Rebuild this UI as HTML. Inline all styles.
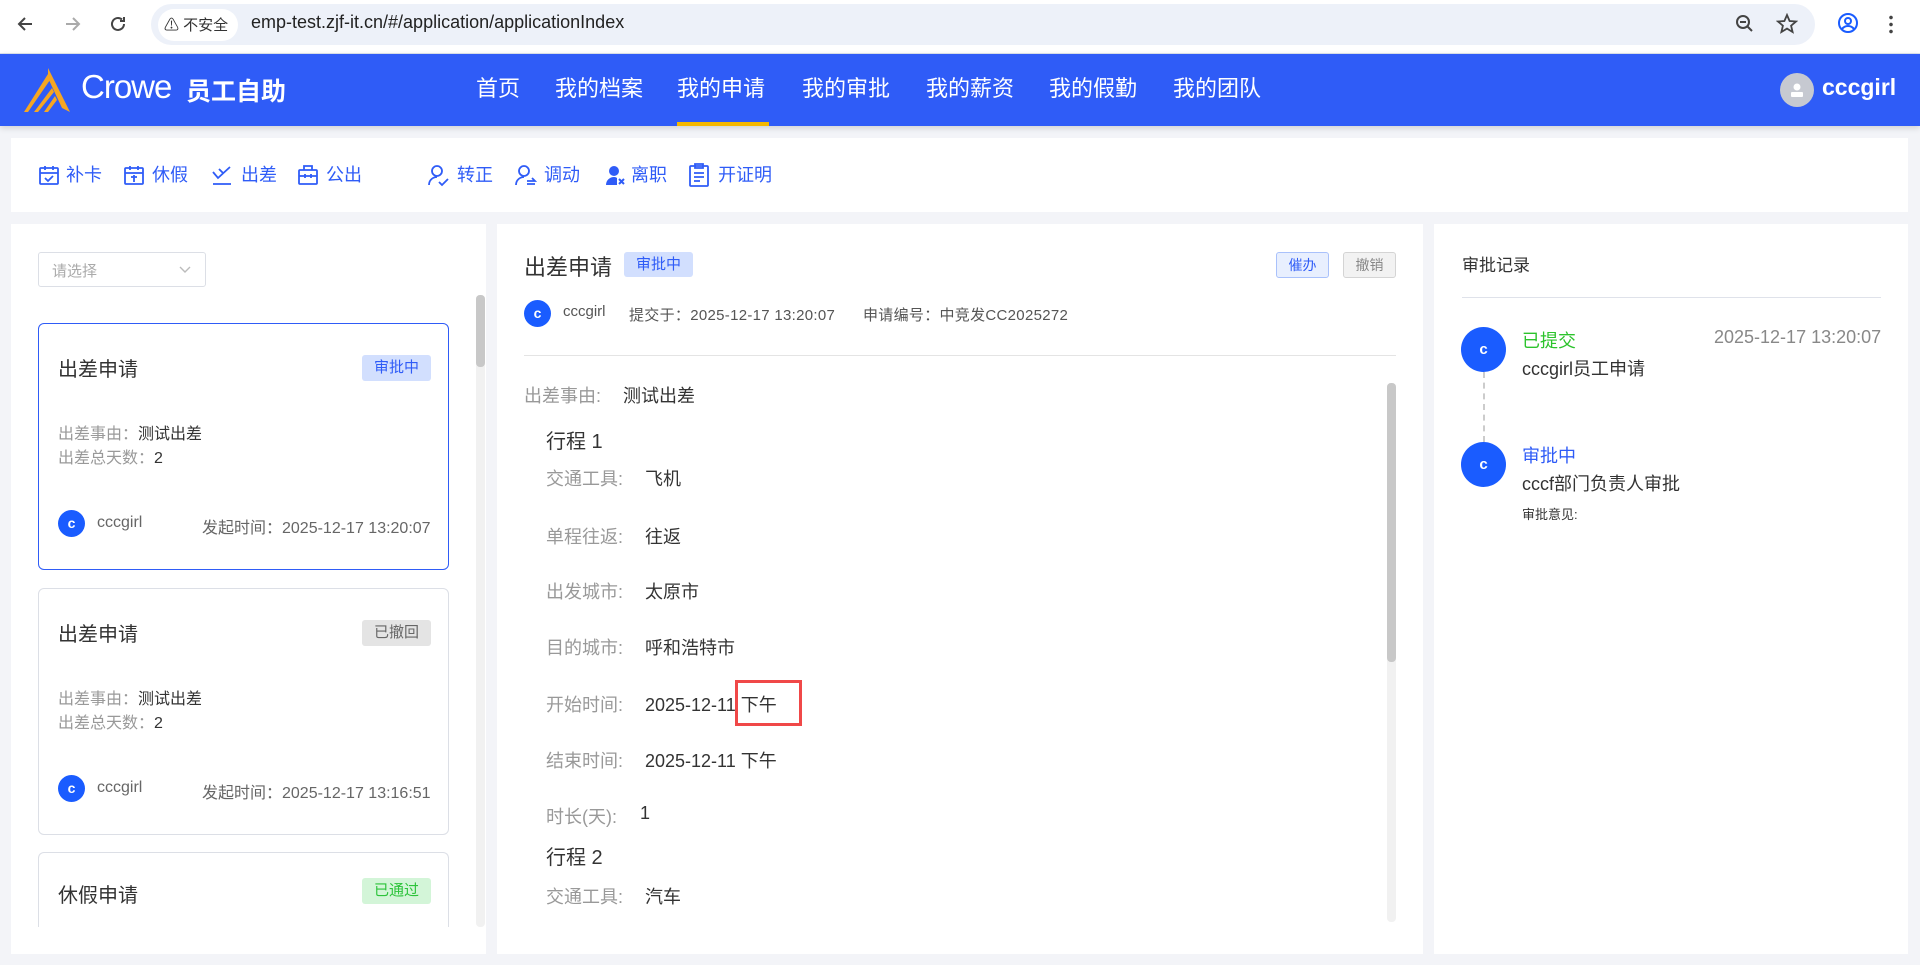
<!DOCTYPE html>
<html><head><meta charset="utf-8"><style>
*{margin:0;padding:0;box-sizing:border-box}
body{width:1920px;height:965px;overflow:hidden;background:#f3f4f8;font-family:"Liberation Sans","Noto Sans CJK SC",sans-serif;position:relative;color:#333}
.a{position:absolute;white-space:nowrap}
.chrome{left:0;top:0;width:1920px;height:54px;background:#fff;border-bottom:1px solid #dde3ee}
.pill{left:151px;top:4px;width:1664px;height:41px;border-radius:21px;background:#edf1f9}
.hdr{left:0;top:54px;width:1920px;height:72px;background:#2f5cf7;box-shadow:0 2px 6px rgba(0,0,0,.15)}
.nav{top:74px;font-size:22px;color:#fff;line-height:30px}
.card{background:#fff}
.tb{top:162px;font-size:18px;color:#2f5cf7;line-height:26px}
.av{border-radius:50%;background:#1a5cff;color:#fff;font-size:14px;text-align:center;font-weight:bold}
.row{font-size:18px;color:#333}
.lbl{color:#999}
.c{position:absolute;left:38px;width:411px;height:247px;border:1px solid #dcdfe6;border-radius:6px;background:#fff}
.c .t{position:absolute;left:19px;top:29px;font-size:20px;color:#333}
.c .bd{position:absolute;left:323px;top:31px;width:69px;height:26px;border-radius:3px;font-size:15px;text-align:center;line-height:26px}
.c .f{position:absolute;left:19px;font-size:16px;color:#333}
</style></head><body>
<div class="a chrome"></div>
<div class="a pill"></div>
<svg class="a" style="left:14px;top:13px" width="22" height="22" viewBox="0 0 22 22"><path d="M18 11H5M11 5l-6 6 6 6" stroke="#444" stroke-width="2" fill="none"/></svg>
<svg class="a" style="left:62px;top:13px" width="22" height="22" viewBox="0 0 22 22"><path d="M4 11h13M11 5l6 6-6 6" stroke="#aaa" stroke-width="2" fill="none"/></svg>
<svg class="a" style="left:107px;top:13px" width="22" height="22" viewBox="0 0 22 22"><path d="M17 11a6 6 0 1 1-2-4.5M17 4v4h-4" stroke="#444" stroke-width="2" fill="none"/></svg>
<div class="a" style="left:158px;top:9px;width:80px;height:32px;border-radius:16px;background:#fff"></div>
<div class="a" style="left:164px;top:14px;font-size:15px;color:#333">⚠ 不安全</div>
<div class="a" style="left:251px;top:12px;font-size:18px;color:#222">emp-test.zjf-it.cn/#/application/applicationIndex</div>
<svg class="a" style="left:1734px;top:13px" width="22" height="22" viewBox="0 0 22 22"><circle cx="9" cy="9" r="6" stroke="#444" stroke-width="2" fill="none"/><path d="M13 13l5 5M6 9h6" stroke="#444" stroke-width="2"/></svg>
<svg class="a" style="left:1776px;top:13px" width="22" height="22" viewBox="0 0 22 22"><path d="M11 2l2.6 6 6.4.5-4.9 4.2 1.5 6.3L11 15.6 5.4 19l1.5-6.3L2 8.5 8.4 8z" stroke="#444" stroke-width="1.8" fill="none"/></svg>
<svg class="a" style="left:1836px;top:11px" width="24" height="24" viewBox="0 0 24 24"><circle cx="12" cy="12" r="9" stroke="#1a5cff" stroke-width="2" fill="none"/><circle cx="12" cy="10" r="3" stroke="#1a5cff" stroke-width="2" fill="none"/><path d="M6 18c3-4 9-4 12 0" stroke="#1a5cff" stroke-width="2" fill="none"/></svg>
<div class="a" style="left:1889px;top:14px;width:4px;height:20px;background:radial-gradient(circle,#444 1.6px,transparent 2px) 0 0/4px 7px"></div>

<div class="a hdr"></div>
<svg class="a" style="left:22px;top:68px" width="50" height="46" viewBox="0 0 50 46"><path d="M26 0L48 44 40 40 26 10Z" fill="#f5a623"/><path d="M26 6L2 44 6 44 28 12Z" fill="#f5a623"/><path d="M30 20L12 44 16 44 32 24Z" fill="#f5a623"/><path d="M33 28L22 44 26 44 35 32Z" fill="#f5a623"/></svg>
<div class="a" style="left:81px;top:68px;font-size:33px;color:#fff;letter-spacing:-1px">Crowe</div>
<div class="a" style="left:186px;top:72px;font-size:25px;color:#fff;font-weight:bold">员工自助</div>
<div class="a nav" style="left:476px">首页</div>
<div class="a nav" style="left:555px">我的档案</div>
<div class="a nav" style="left:677px">我的申请</div>
<div class="a" style="left:677px;top:122px;width:92px;height:4px;background:#f5b800"></div>
<div class="a nav" style="left:802px">我的审批</div>
<div class="a nav" style="left:926px">我的薪资</div>
<div class="a nav" style="left:1049px">我的假勤</div>
<div class="a nav" style="left:1173px">我的团队</div>
<div class="a" style="left:1780px;top:73px;width:34px;height:34px;border-radius:50%;background:#c6c9d1"></div>
<svg class="a" style="left:1787px;top:80px" width="20" height="20" viewBox="0 0 20 20"><circle cx="10" cy="7" r="3.5" fill="#fff"/><rect x="4" y="12" width="12" height="5" rx="1" fill="#fff"/></svg>
<div class="a" style="left:1822px;top:74px;font-size:23px;color:#fff;font-weight:bold">cccgirl</div>

<div class="a card" style="left:11px;top:138px;width:1897px;height:74px"></div>
<svg class="a" style="left:38px;top:164px" width="22" height="22" viewBox="0 0 22 22" fill="none" stroke="#2f5cf7" stroke-width="1.8"><rect x="2" y="4" width="18" height="16" rx="1"/><path d="M2 9h18M7 2v4M15 2v4M7 14l3 3 5-5"/></svg>
<div class="a tb" style="left:66px">补卡</div>
<svg class="a" style="left:123px;top:164px" width="22" height="22" viewBox="0 0 22 22" fill="none" stroke="#2f5cf7" stroke-width="1.8"><rect x="2" y="4" width="18" height="16" rx="1"/><path d="M2 9h18M7 2v4M15 2v4M8 13h6M11 11v7"/></svg>
<div class="a tb" style="left:152px">休假</div>
<svg class="a" style="left:210px;top:164px" width="24" height="22" viewBox="0 0 24 22" fill="none" stroke="#2f5cf7" stroke-width="1.8"><path d="M3 8l5 6 12-11M9 5l4 4M3 20h18"/></svg>
<div class="a tb" style="left:241px">出差</div>
<svg class="a" style="left:297px;top:164px" width="22" height="22" viewBox="0 0 22 22" fill="none" stroke="#2f5cf7" stroke-width="1.8"><rect x="2" y="6" width="18" height="14" rx="1"/><path d="M7 6V2h8v4M2 12h18M8 10v4M14 10v4"/></svg>
<div class="a tb" style="left:326px">公出</div>
<svg class="a" style="left:426px;top:163px" width="24" height="24" viewBox="0 0 24 24" fill="none" stroke="#2f5cf7" stroke-width="1.8"><circle cx="11" cy="8" r="5"/><path d="M3 22c0-5 4-8 8-8M13 19l3 3 6-6"/></svg>
<div class="a tb" style="left:457px">转正</div>
<svg class="a" style="left:513px;top:163px" width="24" height="24" viewBox="0 0 24 24" fill="none" stroke="#2f5cf7" stroke-width="1.8"><circle cx="11" cy="8" r="5"/><path d="M3 22c0-5 4-8 8-8M14 18h8l-3-3M22 21h-8"/></svg>
<div class="a tb" style="left:544px">调动</div>
<svg class="a" style="left:603px;top:163px" width="24" height="24" viewBox="0 0 24 24" fill="#2f5cf7"><circle cx="11" cy="8" r="5"/><path d="M3 22c0-5 4-8 8-8 2 0 3 1 3 1v7z"/><path d="M16 16l5 5M21 16l-5 5" stroke="#2f5cf7" stroke-width="2"/></svg>
<div class="a tb" style="left:631px">离职</div>
<svg class="a" style="left:688px;top:163px" width="22" height="24" viewBox="0 0 22 24" fill="none" stroke="#2f5cf7" stroke-width="1.8"><rect x="2" y="3" width="18" height="20" rx="1"/><path d="M7 1h8v4H7zM6 10h10M6 14h10M6 18h6"/></svg>
<div class="a tb" style="left:718px">开证明</div>

<!-- left -->
<div class="a card" style="left:11px;top:224px;width:475px;height:730px"></div>
<div class="a" style="left:38px;top:252px;width:168px;height:35px;border:1px solid #dcdfe6;border-radius:3px"></div>
<div class="a" style="left:52px;top:260px;font-size:15px;color:#aaa">请选择</div>
<svg class="a" style="left:178px;top:262px" width="14" height="14" viewBox="0 0 14 14"><path d="M2 5l5 5 5-5" stroke="#bbb" stroke-width="1.4" fill="none"/></svg>
<div class="a" style="left:476px;top:295px;width:9px;height:632px;background:#f1f1f1;border-radius:4px"></div>
<div class="a" style="left:476px;top:295px;width:9px;height:72px;background:#c8c8c8;border-radius:4px"></div>

<div class="c" style="top:323px;border-color:#2f5cf7">
<div class="t">出差申请</div><div class="bd" style="background:#d2dffe;color:#2f5cf7">审批中</div>
<div class="f" style="top:96px"><span class="lbl">出差事由：</span>测试出差</div>
<div class="f" style="top:120px"><span class="lbl">出差总天数：</span>2</div>
<div class="a av" style="left:19px;top:186px;width:27px;height:27px;line-height:27px">c</div>
<div class="f" style="left:58px;top:190px;color:#666">cccgirl</div>
<div class="f" style="left:163px;top:190px;color:#666">发起时间：2025-12-17 13:20:07</div>
</div>
<div class="c" style="top:588px">
<div class="t">出差申请</div><div class="bd" style="background:#e4e4e4;color:#666">已撤回</div>
<div class="f" style="top:96px"><span class="lbl">出差事由：</span>测试出差</div>
<div class="f" style="top:120px"><span class="lbl">出差总天数：</span>2</div>
<div class="a av" style="left:19px;top:186px;width:27px;height:27px;line-height:27px">c</div>
<div class="f" style="left:58px;top:190px;color:#666">cccgirl</div>
<div class="f" style="left:163px;top:190px;color:#666">发起时间：2025-12-17 13:16:51</div>
</div>
<div class="c" style="top:852px;height:75px;border-bottom:none;border-radius:6px 6px 0 0">
<div class="t" style="top:26px">休假申请</div><div class="bd" style="top:25px;background:#d3f5d8;color:#2cc33a">已通过</div>
</div>
<div class="a" style="left:11px;top:927px;width:465px;height:27px;background:#fff"></div>

<!-- middle -->
<div class="a card" style="left:497px;top:224px;width:926px;height:730px"></div>
<div class="a" style="left:524px;top:250px;font-size:22px;color:#333">出差申请</div>
<div class="a" style="left:624px;top:252px;width:69px;height:25px;background:#d2dffe;border-radius:3px;color:#2f5cf7;font-size:15px;text-align:center;line-height:25px">审批中</div>
<div class="a" style="left:1276px;top:252px;width:53px;height:26px;background:#e8effe;border:1px solid #a9c1fb;border-radius:3px;color:#2f5cf7;font-size:14px;text-align:center;line-height:24px">催办</div>
<div class="a" style="left:1343px;top:252px;width:53px;height:26px;background:#f2f2f2;border:1px solid #d4d4d4;border-radius:3px;color:#888;font-size:14px;text-align:center;line-height:24px">撤销</div>
<div class="a av" style="left:524px;top:300px;width:27px;height:27px;line-height:27px">c</div>
<div class="a" style="left:563px;top:303px;font-size:15px;color:#555">cccgirl</div>
<div class="a" style="left:629px;top:304px;font-size:15px;color:#555;letter-spacing:.3px">提交于：2025-12-17 13:20:07</div>
<div class="a" style="left:863px;top:304px;font-size:15px;color:#555;letter-spacing:.3px">申请编号：中竞发CC2025272</div>
<div class="a" style="left:524px;top:355px;width:872px;height:1px;background:#e4e4e4"></div>
<div class="a" style="left:1387px;top:383px;width:9px;height:539px;background:#f1f1f1;border-radius:4px"></div>
<div class="a" style="left:1387px;top:383px;width:9px;height:279px;background:#c8c8c8;border-radius:4px"></div>
<div class="a row lbl" style="left:524px;top:382px">出差事由:</div><div class="a row" style="left:623px;top:382px">测试出差</div>
<div class="a" style="left:546px;top:425px;font-size:20px;color:#333">行程 1</div>
<div class="a row lbl" style="left:546px;top:465px">交通工具:</div><div class="a row" style="left:645px;top:465px">飞机</div>
<div class="a row lbl" style="left:546px;top:523px">单程往返:</div><div class="a row" style="left:645px;top:523px">往返</div>
<div class="a row lbl" style="left:546px;top:578px">出发城市:</div><div class="a row" style="left:645px;top:578px">太原市</div>
<div class="a row lbl" style="left:546px;top:634px">目的城市:</div><div class="a row" style="left:645px;top:634px">呼和浩特市</div>
<div class="a row lbl" style="left:546px;top:691px">开始时间:</div><div class="a row" style="left:645px;top:691px">2025-12-11 下午</div>
<div class="a" style="left:735px;top:680px;width:67px;height:46px;border:3px solid #f04848"></div>
<div class="a row lbl" style="left:546px;top:747px">结束时间:</div><div class="a row" style="left:645px;top:747px">2025-12-11 下午</div>
<div class="a row lbl" style="left:546px;top:803px">时长(天):</div><div class="a row" style="left:640px;top:803px">1</div>
<div class="a" style="left:546px;top:841px;font-size:20px;color:#333">行程 2</div>
<div class="a row lbl" style="left:546px;top:883px">交通工具:</div><div class="a row" style="left:645px;top:883px">汽车</div>

<!-- right -->
<div class="a card" style="left:1434px;top:224px;width:474px;height:730px"></div>
<div class="a" style="left:1462px;top:251px;font-size:17px;color:#333">审批记录</div>
<div class="a" style="left:1462px;top:297px;width:419px;height:1px;background:#dfe2ea"></div>
<div class="a" style="left:1483px;top:372px;width:0;height:70px;border-left:2px dashed #ccc"></div>
<div class="a av" style="left:1461px;top:327px;width:45px;height:45px;line-height:45px;font-size:15px">c</div>
<div class="a" style="left:1522px;top:327px;font-size:18px;color:#2cc32c">已提交</div>
<div class="a" style="left:1714px;top:327px;font-size:18px;color:#888">2025-12-17 13:20:07</div>
<div class="a" style="left:1522px;top:355px;font-size:18px;color:#333">cccgirl员工申请</div>
<div class="a av" style="left:1461px;top:442px;width:45px;height:45px;line-height:45px;font-size:15px">c</div>
<div class="a" style="left:1522px;top:442px;font-size:18px;color:#2f5cf7">审批中</div>
<div class="a" style="left:1522px;top:470px;font-size:18px;color:#333">cccf部门负责人审批</div>
<div class="a" style="left:1522px;top:504px;font-size:13px;color:#333">审批意见:</div>
</body></html>
